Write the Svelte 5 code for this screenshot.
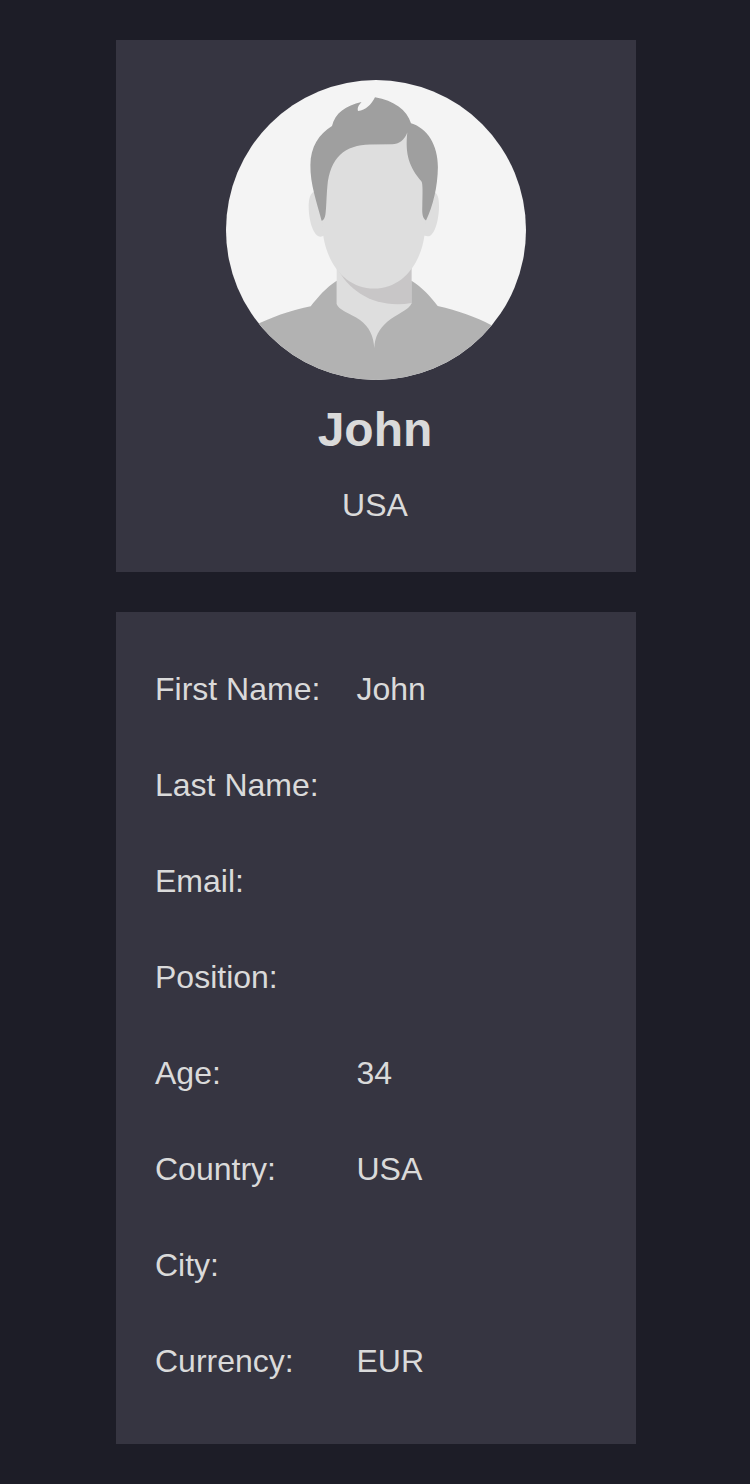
<script>
  const profile = { name: 'John', country: 'USA' };
  const details = [
    ['First Name', 'John'],
    ['Last Name', ''],
    ['Email', ''],
    ['Position', ''],
    ['Age', '34'],
    ['Country', 'USA'],
    ['City', ''],
    ['Currency', 'EUR']
  ];
</script>

<main>
  <section class="card summary">
    <svg class="avatar" viewBox="226 80 300 300" aria-hidden="true">
      <rect x="226" y="80" width="300" height="300" fill="#f4f4f4" />
      <!-- ears -->
      <path fill="#dedede" d="M316 191C310 192 308.500 199 308.700 208C309 222 314 237 320.700 236.700L326 235V191ZM432 191C438 192 439.300 199 439 208C438.500 222 434 237 427.500 236.300L421 235V191Z" />
      <!-- neck -->
      <path fill="#dedede" d="M336.700 255H411.500V308L377 350H371L336.700 308Z" />
      <path fill="#c8c6c7" d="M336.700 267C349 292 376 309 411.500 303V262Z" />
      <!-- face -->
      <path fill="#dedede" d="M322 190V222C323 262 345 288.600 374 288.600S425 262 425.500 222V140L407 125H350L322 150Z" />
      <!-- shirt -->
      <path fill="#b2b2b2" d="M226 343C248 327 276 313.500 310.700 306.300C318 297 326 287.500 336.700 280.700V304C338 310 350 313 360 320C369.500 327 373.500 336 374.300 348C374.800 337 379 329 387 322C397 313.500 409 310 411.500 303.500V280.700C422 287 430 296 437.700 306C458 310.500 476 317 491 325C505 332 516 338 526 346V380H226Z" />
      <!-- hair -->
      <path fill="#9f9f9f" d="M321.600 220.700C317 203 310 184 310.400 165C310.500 147 319 134 332 126C335 113 346 105.500 361.500 102C358 106 357.300 108 358 111C366 110 371 105 375 97.300C394 100.500 407 110 411 123.300C427 128 438 145 437.900 167C437.700 187 433 206 426 220.600C422.500 218 422 214 422.300 206C422.500 195 423 184 421.500 181.500C409 167 405 154 407.300 132.500C404.500 140 399 144.200 392 144.200L370 144.500C345 145 330 157 327.300 187C326.300 199 326.400 207 325.500 214C325 218 323.500 220.500 321.600 220.700Z" />
    </svg>
    <h1>{profile.name}</h1>
    <p>{profile.country}</p>
  </section>

  <dl class="card details">
    {#each details as [label, value]}
      <div class="row">
        <dt>{label}:</dt>
        <dd>{value}</dd>
      </div>
    {/each}
  </dl>
</main>

<style>
  :global(body) {
    background: #1d1d27;
  }

  main {
    box-sizing: border-box;
    min-height: 1484px;
    padding: 40px 114px 40px 116px;
    display: flex;
    flex-direction: column;
    gap: 40px;
    font-family: "Liberation Sans", Arial, sans-serif;
    font-size: 32px;
    color: #dadada;
  }

  .card {
    box-sizing: border-box;
    margin: 0;
    background: #363541;
  }

  .summary {
    height: 532px;
    padding: 40px 2px 0 0;
    text-align: center;
  }

  .avatar {
    display: block;
    width: 300px;
    height: 300px;
    margin: 0 auto 0 110px;
    border-radius: 50%;
  }

  h1 {
    margin: 22px 0 0;
    font-size: 48px;
    line-height: 56px;
  }

  .summary p {
    margin: 29px 0 0;
    line-height: 36px;
  }

  .details {
    height: 832px;
    padding: 29px 38px 0 39px;
  }

  .row {
    display: grid;
    grid-template-columns: 201.500px 1fr;
    align-items: center;
    height: 96px;
    line-height: 36px;
  }

  dt,
  dd {
    margin: 0;
  }
</style>
